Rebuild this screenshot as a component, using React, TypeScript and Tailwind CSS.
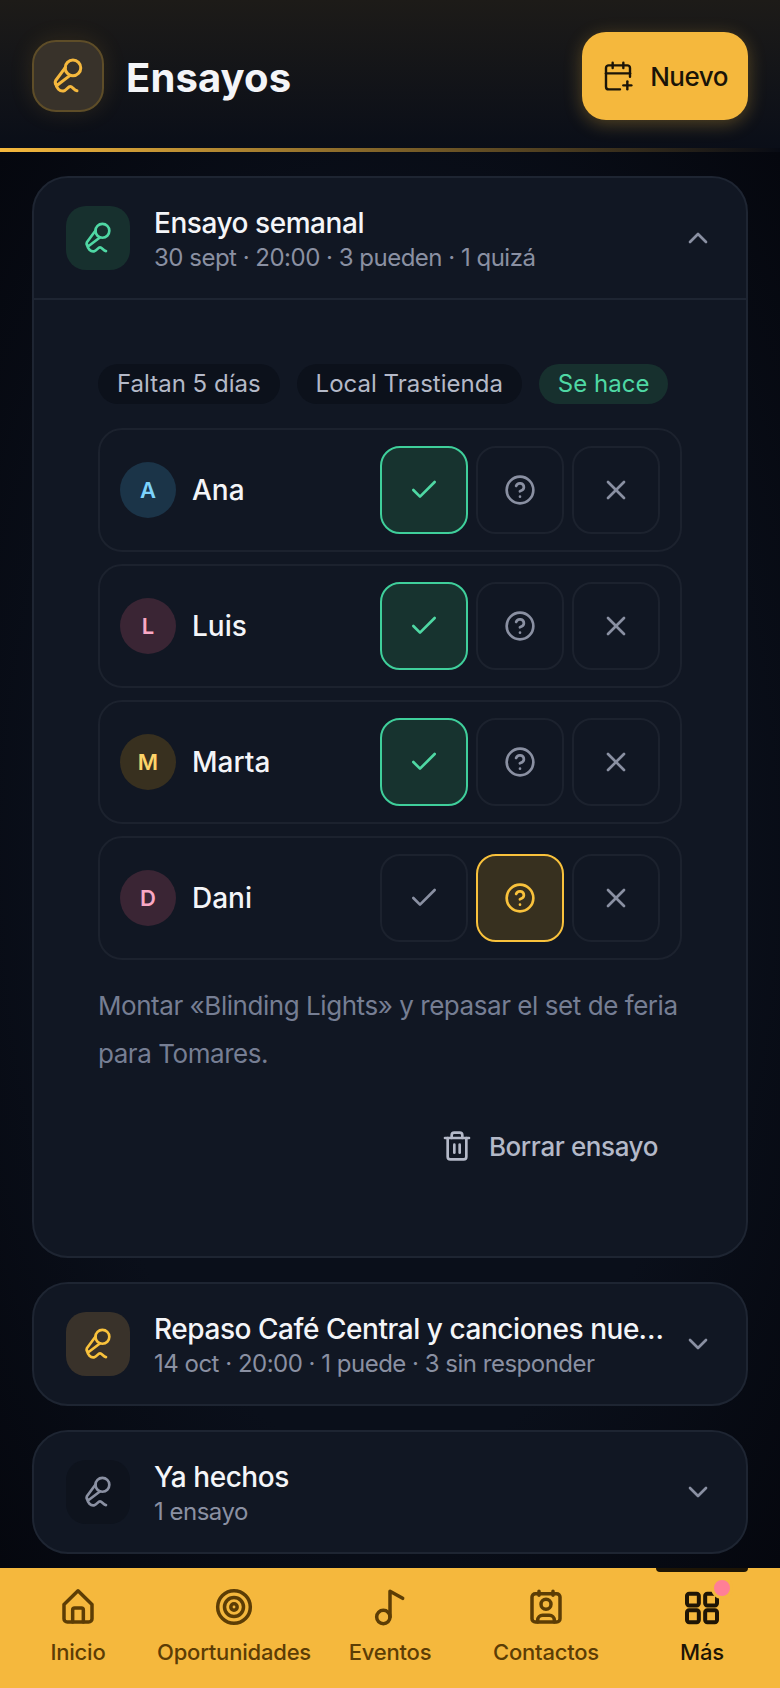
import { CalendarPlus, Check, ChevronDown, ChevronUp, CircleHelp, Trash2, X } from "lucide-react";

const MEMBERS = [
  { name: "Ana", initial: "A", avatar: "bg-[#1b3448] text-[#7dd3fc]", answer: "yes" },
  { name: "Luis", initial: "L", avatar: "bg-[#3a2534] text-[#f9a8c4]", answer: "yes" },
  { name: "Marta", initial: "M", avatar: "bg-[#38301f] text-[#fcd369]", answer: "yes" },
  { name: "Dani", initial: "D", avatar: "bg-[#3a2534] text-[#f9a8c4]", answer: "maybe" },
];

const MicIcon = ({ className }: { className: string }) => (
  <svg viewBox="0 0 24 24" fill="none" stroke="currentColor" strokeWidth="2" strokeLinecap="round" strokeLinejoin="round" className={className}>
    <circle cx="15.300" cy="6.600" r="5.200" />
    <path d="M10.300 6.200 3.800 15c-.8 1.500-.2 3 1.200 3l8.400-6.400" />
    <path d="M3.800 17c.4 3 2.700 5.500 5.200 5 2-.4 3-3 4.500-3s2.500 2.500 4.500 2.800" />
  </svg>
);

const HomeIcon = () => (
  <svg viewBox="0 0 24 24" fill="none" stroke="currentColor" strokeWidth="2.1" strokeLinecap="round" strokeLinejoin="round" className="h-10 w-10">
    <path d="M3.600 10.500 12 2.300l8.400 8.200V19a2 2 0 0 1-2 2H5.600a2 2 0 0 1-2-2Z" />
    <path d="M8.800 21v-7.200a1.200 1.200 0 0 1 1.200-1.200h4a1.200 1.200 0 0 1 1.200 1.200V21" />
  </svg>
);

const TargetIcon = () => (
  <svg viewBox="0 0 24 24" fill="none" stroke="currentColor" strokeWidth="2.1" className="h-10 w-10">
    <circle cx="12" cy="12" r="9.800" />
    <circle cx="12" cy="12" r="5.700" />
    <circle cx="12" cy="12" r="1.900" />
  </svg>
);

const NoteIcon = () => (
  <svg viewBox="0 0 24 24" fill="none" stroke="currentColor" strokeWidth="2.1" strokeLinecap="round" strokeLinejoin="round" className="h-10 w-10">
    <circle cx="8" cy="18" r="4" />
    <path d="M12 18V2.500l7.600 4.300" />
  </svg>
);

const ContactIcon = () => (
  <svg viewBox="0 0 24 24" fill="none" stroke="currentColor" strokeWidth="2.1" strokeLinecap="round" strokeLinejoin="round" className="h-10 w-10">
    <rect x="3.600" y="4" width="16.800" height="17" rx="2" />
    <path d="M7.800 2.500V5M16.200 2.500V5" />
    <circle cx="12" cy="10.400" r="3" />
    <path d="M7 21v-1a3 3 0 0 1 3-3h4a3 3 0 0 1 3 3v1" />
  </svg>
);

const GridIcon = () => (
  <svg viewBox="0 0 24 24" fill="none" stroke="currentColor" strokeWidth="2.400" strokeLinejoin="round" className="h-10 w-10">
    <rect x="3" y="4" width="7.100" height="7.100" rx="1.300" />
    <rect x="13.900" y="4" width="7.100" height="7.100" rx="1.300" />
    <rect x="3" y="14" width="7.100" height="7.100" rx="1.300" />
    <rect x="13.900" y="14" width="7.100" height="7.100" rx="1.300" />
  </svg>
);

const NAV_ITEMS = [
  { label: "Inicio", icon: <HomeIcon /> },
  { label: "Oportunidades", icon: <TargetIcon /> },
  { label: "Eventos", icon: <NoteIcon /> },
  { label: "Contactos", icon: <ContactIcon /> },
];

const AnswerButton = ({ kind, active }: { kind: string; active: boolean }) => {
  const tone = !active
    ? "border-[#1c222e] text-[#8a90a2]"
    : kind === "yes"
      ? "border-[#3fcf9b] bg-[#17332f] text-[#4fd8a4]"
      : "border-[#f9c23c] bg-[#37301f] text-[#f9c23c]";
  return (
    <button className={`flex h-[88px] w-[88px] items-center justify-center rounded-[20px] border-2 ${tone}`}>
      {kind === "yes" && <Check size={32} />}
      {kind === "maybe" && <CircleHelp size={32} />}
      {kind === "no" && <X size={32} />}
    </button>
  );
};

const CardHeader = ({
  title,
  subtitle,
  iconBox,
  open,
}: {
  title: string;
  subtitle: string;
  iconBox: string;
  open?: boolean;
}) => (
  <div className="flex h-[120px] items-center gap-6 px-8">
    <div className={`flex h-16 w-16 shrink-0 items-center justify-center rounded-[20px] ${iconBox}`}>
      <MicIcon className="h-8 w-8" />
    </div>
    <div className="min-w-0 flex-1 pt-1">
      <p className="-mr-[6px] truncate text-[28px] leading-[32px] font-medium tracking-[-0.45px] text-[#f4f5f8]">{title}</p>
      <p className="mt-[3px] truncate text-[24px] leading-[32px] tracking-[-0.5px] text-[#8a90a2]">{subtitle}</p>
    </div>
    {open ? (
      <ChevronUp size={32} className="shrink-0 text-[#8a90a2]" />
    ) : (
      <ChevronDown size={32} className="shrink-0 text-[#8a90a2]" />
    )}
  </div>
);

const App = () => {
  return (
    <div className="flex h-[1688px] w-[780px] flex-col overflow-hidden bg-[#080b14] font-['Inter',sans-serif]">
      {/* Header */}
      <header className="flex h-[148px] shrink-0 items-start justify-between bg-gradient-to-b from-[#1d1b18] to-[#0a0e18] px-8 pt-8">
        <div className="mt-2 flex items-center gap-[22px]">
          <div className="flex h-[72px] w-[72px] items-center justify-center rounded-[24px] border-2 border-[#5e4d28] bg-[#38322a] text-[#f5b83d] shadow-[0_0_24px_rgba(245,184,61,0.12)]">
            <MicIcon className="h-9 w-9" />
          </div>
          <h1 className="mt-[3px] text-[40px] leading-[56px] font-bold tracking-[0.1px] text-[#f4f5f8]">Ensayos</h1>
        </div>
        <button className="flex h-[88px] w-[166px] items-center justify-center gap-4 rounded-[24px] bg-[#f5b83d] text-[26px] font-medium tracking-[-0.5px] text-[#1a1408] shadow-[0_4px_18px_rgba(245,184,61,0.3)]">
          <CalendarPlus size={32} strokeWidth={1.8} />
          Nuevo
        </button>
      </header>
      <div className="h-1 shrink-0 bg-gradient-to-r from-[#f5b83d] to-transparent" />

      {/* List */}
      <main className="flex min-h-0 flex-1 flex-col gap-6 bg-[radial-gradient(ellipse_at_center,#0a0f1a_60%,#05070e_100%)] px-8 pt-6">
        <section className="shrink-0 rounded-[36px] border-2 border-[#1e2532] bg-[#111723]">
          <CardHeader title="Ensayo semanal" subtitle="30 sept · 20:00 · 3 pueden · 1 quizá" iconBox="bg-[#17302e] text-[#4fd8a4]" open />
          <div className="border-t-2 border-[#1e2532] px-16 pt-16 pb-[66px]">
            <div className="flex gap-[17px] text-[24px] leading-[40px]">
              <span className="rounded-full bg-[#0c111b] px-[19px] text-[#b4b9c8]">Faltan 5 días</span>
              <span className="rounded-full bg-[#0c111b] px-[19px] text-[#b4b9c8]">Local Trastienda</span>
              <span className="rounded-full bg-[#17302e] px-[19px] text-[#4fd8a4]">Se hace</span>
            </div>
            <div className="mt-6 flex flex-col gap-3">
              {MEMBERS.map((member) => (
                <div key={member.name} className="flex h-[124px] items-center gap-4 rounded-[24px] border-2 border-[#1c222e] px-5">
                  <div className={`flex h-14 w-14 items-center justify-center rounded-full text-[22px] font-semibold ${member.avatar}`}>
                    {member.initial}
                  </div>
                  <span className="flex-1 text-[28px] font-medium text-[#f4f5f8]">{member.name}</span>
                  <div className="flex gap-2">
                    <AnswerButton kind="yes" active={member.answer === "yes"} />
                    <AnswerButton kind="maybe" active={member.answer === "maybe"} />
                    <AnswerButton kind="no" active={false} />
                  </div>
                </div>
              ))}
            </div>
            <p className="mt-[22px] text-[26px] leading-[48px] tracking-[-0.45px] text-[#767e93]">
              Montar «Blinding Lights» y repasar el set de feria para Tomares.
            </p>
            <div className="mt-6 flex justify-end">
              <button className="flex h-[88px] items-center gap-4 pr-6 text-[26px] font-medium tracking-[-0.4px] text-[#b4b9c8]">
                <Trash2 size={32} />
                Borrar ensayo
              </button>
            </div>
          </div>
        </section>

        <section className="shrink-0 rounded-[36px] border-2 border-[#1e2532] bg-[#111723]">
          <CardHeader title="Repaso Café Central y canciones nuevas" subtitle="14 oct · 20:00 · 1 puede · 3 sin responder" iconBox="bg-[#39322a] text-[#f9c23c]" />
        </section>
        <section className="shrink-0 rounded-[36px] border-2 border-[#1e2532] bg-[#111723]">
          <CardHeader title="Ya hechos" subtitle="1 ensayo" iconBox="bg-[#0e131d] text-[#8a90a2]" />
        </section>
      </main>

      {/* Bottom nav */}
      <nav className="relative grid h-[120px] shrink-0 grid-cols-5 bg-[#f5b83d] text-[22px] font-medium tracking-[-0.2px] text-[#5c3d05]">
        <div className="absolute top-0 right-8 h-1 w-[92px] rounded-b-md bg-[#1e1505]" />
        {NAV_ITEMS.map((item) => (
          <a key={item.label} href="#" className="flex flex-col items-center pt-[19px]">
            {item.icon}
            <span className="mt-[9px] leading-[32px] whitespace-nowrap">{item.label}</span>
          </a>
        ))}
        <a href="#" className="flex flex-col items-center pt-[19px] text-[#1e1505]">
          <span className="relative">
            <GridIcon />
            <span className="absolute -top-[10px] -right-[11px] h-[22px] w-[22px] rounded-full border-[3px] border-[#f5b83d] bg-[#ff7f96]" />
          </span>
          <span className="mt-[9px] leading-[32px]">Más</span>
        </a>
      </nav>
    </div>
  );
};

export default App;
